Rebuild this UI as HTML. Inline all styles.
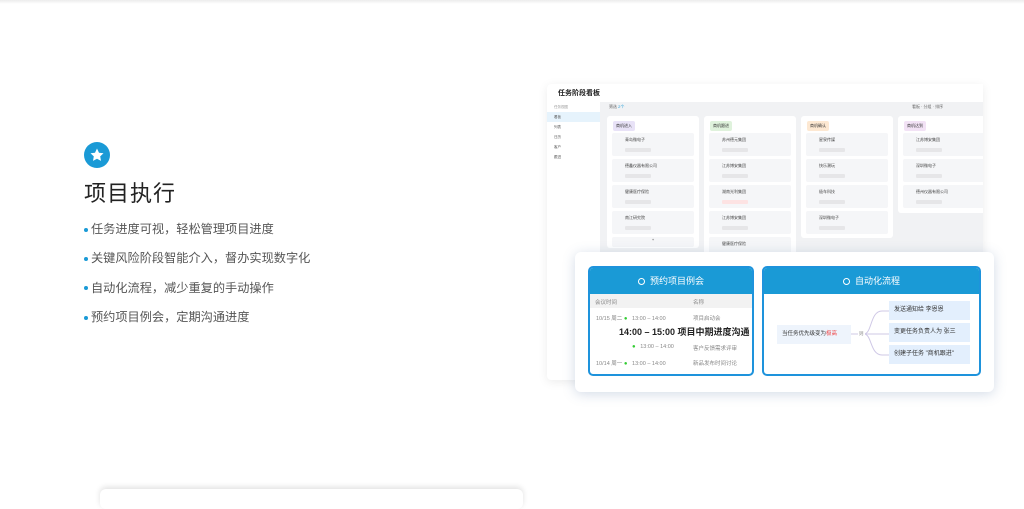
<!DOCTYPE html>
<html><head><meta charset="utf-8"><style>
*{margin:0;padding:0;box-sizing:border-box}
body{width:1024px;height:492px;overflow:hidden;background:#fff;font-family:"Liberation Sans","Noto Sans CJK SC",sans-serif;position:relative}
.abs{position:absolute}
.topline{left:0;top:0;width:1024px;height:4px;background:linear-gradient(#ececec,#fff)}
.icon{left:84px;top:142px;width:26px;height:26px;border-radius:50%;background:#1a9ad6}
h1{position:absolute;left:84px;top:176px;font-size:22px;font-weight:400;color:#222;letter-spacing:1px}
ul{position:absolute;left:84px;top:219px;list-style:none;font-size:12.2px;color:#555}
li{height:29.3px;line-height:20px}
li:before{content:"";display:inline-block;width:4px;height:4px;border-radius:50%;background:#1a9ad6;margin-right:3px;vertical-align:middle}
.win{left:547px;top:84px;width:436px;height:296px;background:#f1f2f4;box-shadow:0 2px 10px rgba(0,0,0,.08);border-radius:4px 0 0 4px;overflow:hidden}
.tb{left:0;top:0;width:436px;height:18px;background:#fff;font-size:7px;font-weight:bold;color:#222;padding:4px 0 0 11px}
.sb{left:0;top:18px;width:53px;height:280px;background:#fff;font-size:3.5px;color:#555}
.sb div{height:10px;line-height:10px;padding-left:7px}
.col{background:#fff;width:92px;border-radius:3px}
.tag{position:absolute;left:6px;top:5px;font-size:4px;padding:2px 3px;border-radius:2px;color:#333}
.card{position:absolute;left:5px;width:82px;height:23px;background:#f5f6f8;border-radius:2px;font-size:4px;color:#444;padding:4px 0 0 13px}
.card i{display:block;margin-top:5px;width:26px;height:4px;background:#e6e6e8;border-radius:1px}
.ov{left:575px;top:252px;width:419px;height:140px;background:#fff;border-radius:6px;box-shadow:0 2px 12px rgba(80,110,160,.25)}
.box{top:14px;height:110px;border:2px solid #1e93dc;border-radius:5px;overflow:hidden;background:#fff}
.bh{height:26px;background:#1a9ad6;color:#fff;font-size:9px;text-align:center;line-height:26px}
.bh span{display:inline-block;width:7px;height:7px;border:1.3px solid #fff;border-radius:50%;margin-right:5px;vertical-align:-0.5px}
.r{font-size:5.5px;color:#888;position:absolute}
.nd{background:#e3effd;font-size:6px;color:#333;position:absolute;height:19px;line-height:19px;padding-left:5px}
.bottom{left:100px;top:489px;width:423px;height:20px;background:#fff;border-radius:6px;box-shadow:0 -2px 6px rgba(0,0,0,.12)}
</style></head><body>
<div class="abs topline"></div>
<div class="abs icon"><svg width="26" height="26" viewBox="0 0 26 26"><path d="M13 6.5l2 4.2 4.5.6-3.3 3.1.8 4.5L13 16.7l-4 2.2.8-4.5-3.3-3.1 4.5-.6z" fill="#fff"/></svg></div>
<h1>项目执行</h1>
<ul><li>任务进度可视，轻松管理项目进度</li><li>关键风险阶段智能介入，督办实现数字化</li><li>自动化流程，减少重复的手动操作</li><li>预约项目例会，定期沟通进度</li></ul>

<div class="abs win">
<div class="abs tb">任务阶段看板</div>
<div class="abs sb"><div style="color:#999">任务视图</div><div style="background:#e6f3fc">看板</div><div>列表</div><div>日历</div><div>客户</div><div>跟进</div></div>
<div class="abs" style="left:62px;top:20px;font-size:4px;color:#666">筛选 <span style="color:#1a9ad6">2个</span></div>
<div class="abs" style="left:365px;top:20px;font-size:4px;color:#666">看板 · 分组 · 排序</div>

<div class="abs col" style="left:60px;top:32px;height:132px">
<div class="tag" style="background:#e8e2f7">商机进入</div>
<div class="card" style="top:17px">青岛微电子<i></i></div>
<div class="card" style="top:43px">德鑫仪器有限公司<i></i></div>
<div class="card" style="top:69px">健康医疗保险<i></i></div>
<div class="card" style="top:95px">南江研究院<i></i></div>
<div class="card" style="top:121px;height:10px;padding:0;text-align:center">+</div>
</div>
<div class="abs col" style="left:157px;top:32px;height:140px">
<div class="tag" style="background:#dff2dc">商机跟进</div>
<div class="card" style="top:17px">苏州德元集团<i></i></div>
<div class="card" style="top:43px">江苏博安集团<i></i></div>
<div class="card" style="top:69px">湖南光利集团<i style="background:#fde3e3"></i></div>
<div class="card" style="top:95px">江苏博安集团<i></i></div>
<div class="card" style="top:121px">健康医疗保险</div>
</div>
<div class="abs col" style="left:254px;top:32px;height:122px">
<div class="tag" style="background:#fde8d2">商机确认</div>
<div class="card" style="top:17px">星泉传媒<i></i></div>
<div class="card" style="top:43px">快乐潮玩<i></i></div>
<div class="card" style="top:69px">极车科技<i></i></div>
<div class="card" style="top:95px">深圳微电子<i></i></div>
</div>
<div class="abs col" style="left:351px;top:32px;height:97px">
<div class="tag" style="background:#f2e2f5">商机达到</div>
<div class="card" style="top:17px">江苏博安集团<i></i></div>
<div class="card" style="top:43px">深圳微电子<i></i></div>
<div class="card" style="top:69px">德州仪器有限公司<i></i></div>
</div>
</div>

<div class="abs ov">
<div class="abs box" style="left:13px;width:166px">
<div class="bh"><span></span>预约项目例会</div>
<div style="height:14px;background:#f2f2f2"></div>
<div class="r" style="left:5px;top:30px">会议时间</div><div class="r" style="left:103px;top:30px">名称</div>
<div class="r" style="left:6px;top:46px">10/15 周二 <b style="color:#3c3;font-size:6px">●</b>&nbsp;&nbsp; 13:00 – 14:00</div><div class="r" style="left:103px;top:46px">项目启动会</div>
<div class="abs" style="left:29px;top:57px;font-size:9px;font-weight:bold;color:#222">14:00 – 15:00 项目中期进度沟通</div>
<div class="r" style="left:42px;top:76px"><b style="color:#3c3;font-size:6px">●</b>&nbsp;&nbsp; 13:00 – 14:00</div><div class="r" style="left:103px;top:76px">客户反馈需求评审</div>
<div class="r" style="left:6px;top:91px">10/14 周一 <b style="color:#3c3;font-size:6px">●</b>&nbsp;&nbsp; 13:00 – 14:00</div><div class="r" style="left:103px;top:91px">新品发布时间讨论</div>
</div>
<div class="abs box" style="left:187px;width:219px">
<div class="bh"><span></span>自动化流程</div>
<svg class="abs" style="left:0;top:0" width="219" height="110"><path d="M87 66H125M100 66C108 66 106 43 118 43H125M100 66C108 66 106 87 118 87H125" stroke="#cfc8e6" fill="none" stroke-width="1"/></svg>
<div class="nd" style="left:13px;top:57px;width:74px;background:#eef4fc;font-size:5.5px">当任务优先级变为<span style="color:#e44">极高</span></div>
<div class="r" style="left:94px;top:63px;font-size:4.5px;background:#fff;padding:0 1px">则</div>
<div class="nd" style="left:125px;top:33px;width:81px">发送通知给 李恩恩</div>
<div class="nd" style="left:125px;top:55px;width:81px">变更任务负责人为 张三</div>
<div class="nd" style="left:125px;top:77px;width:81px">创建子任务 "商机跟进"</div>
</div>
</div>
<div class="abs bottom"></div>
</body></html>
